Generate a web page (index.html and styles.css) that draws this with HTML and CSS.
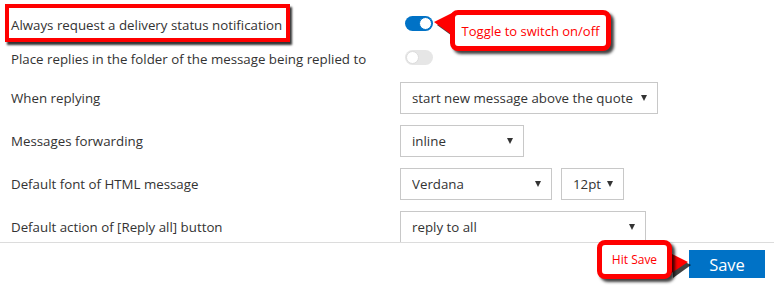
FILE: index.html
```html
<!DOCTYPE html>
<html lang="en">
<head>
    <meta charset="UTF-8">
    <meta name="viewport" content="width=device-width, initial-scale=1.0">
    <title>Mail settings</title>
    <link rel="stylesheet" href="styles.css">
</head>
<body>

    <div class="settings">
        <div class="row row-toggle">
            <label class="label">Always request a delivery status notification</label>
            <span class="toggle on"><span class="knob"></span></span>
        </div>
        <div class="row row-toggle">
            <label class="label">Place replies in the folder of the message being replied to</label>
            <span class="toggle"><span class="knob"></span></span>
        </div>
        <div class="row row-select first">
            <label class="label">When replying</label>
            <div class="controls">
                <span class="select-wrap w-reply">
                    <select><option>start new message above the quote</option></select>
                </span>
            </div>
        </div>
        <div class="row row-select">
            <label class="label">Messages forwarding</label>
            <div class="controls">
                <span class="select-wrap w-forward">
                    <select><option>inline</option></select>
                </span>
            </div>
        </div>
        <div class="row row-select">
            <label class="label">Default font of HTML message</label>
            <div class="controls">
                <span class="select-wrap w-font">
                    <select><option>Verdana</option></select>
                </span>
                <span class="select-wrap w-size">
                    <select><option>12pt</option></select>
                </span>
            </div>
        </div>
        <div class="row row-select">
            <label class="label">Default action of [Reply all] button</label>
            <div class="controls">
                <span class="select-wrap w-replyall">
                    <select><option>reply to all</option></select>
                </span>
            </div>
        </div>
    </div>

    <div class="footer">
        <button class="btn-save">Save</button>
    </div>

    <!-- annotations -->
    <div class="mark-box"></div>

    <svg class="pointer pointer-toggle" width="24" height="30" viewBox="0 0 24 30">
        <polygon points="3,13 21,4 21,26" fill="#000" opacity="0.75"/>
        <polygon points="0,10 18,1 18,23" fill="#f00"/>
    </svg>
    <div class="callout callout-toggle">Toggle to switch on/off</div>

    <svg class="pointer pointer-save" width="24" height="30" viewBox="0 0 24 30">
        <polygon points="21,13 3,4 3,26" fill="#000" opacity="0.75"/>
        <polygon points="18,10 0,1 0,22" fill="#f00"/>
    </svg>
    <div class="callout callout-save">Hit Save</div>

</body>
</html>
```

FILE: styles.css
```css
body {
    margin: 0;
    font-family: "Open Sans", "Noto Sans", Arial, sans-serif;
    font-size: 13.3px;
    color: #333;
    background: #fff;
}
.settings {
    height: 243px;
    overflow: hidden;
    padding-top: 8px;
    box-sizing: border-box;
    border-bottom: 1px solid #dcdcdc;
}
.row {
    display: grid;
    grid-template-columns: 389px 1fr;
    align-items: center;
    padding-left: 11px;
}
.row-toggle {
    height: 34px;
}
.row-select {
    height: 32px;
    margin-top: 11px;
}
.row-select.first {
    margin-top: 6px;
}
.label {
    line-height: 18px;
    white-space: nowrap;
}
.controls {
    display: flex;
    gap: 9px;
}
.toggle {
    position: relative;
    width: 28px;
    height: 15px;
    margin-left: 5px;
    margin-bottom: 4px;
    border-radius: 8px;
    background: #e6e6e6;
    box-sizing: border-box;
}
.toggle .knob {
    position: absolute;
    top: 1px;
    left: 1px;
    width: 13px;
    height: 13px;
    border-radius: 50%;
    background: #fff;
    box-sizing: border-box;
    border: 1px solid #dcdcdc;
}
.toggle.on {
    background: #0072c6;
}
.toggle.on .knob {
    left: auto;
    right: 1px;
    border: 1px solid #0072c6;
}
.select-wrap {
    position: relative;
    display: block;
    height: 32px;
}
.select-wrap::after {
    content: "";
    position: absolute;
    right: 11px;
    top: 13px;
    border-left: 3.5px solid transparent;
    border-right: 3.5px solid transparent;
    border-top: 6px solid #333;
    pointer-events: none;
}
.select-wrap select {
    appearance: none;
    -webkit-appearance: none;
    width: 100%;
    height: 32px;
    padding: 0 20px 0 11px;
    border: 1px solid #c8c8c8;
    border-radius: 0;
    background: #fff;
    font-family: inherit;
    font-size: 13.3px;
    color: #333;
}
.w-reply { width: 258px; }
.w-forward { width: 124px; }
.w-font { width: 152px; }
.w-size { width: 63px; }
.w-size select { padding: 0 14px 0 11px; }
.w-replyall { width: 246px; }
.footer {
    display: flex;
    justify-content: flex-end;
    padding: 7px 9px 0 0;
}
.btn-save {
    width: 76px;
    height: 28px;
    border: none;
    background: #0072c6;
    color: #fff;
    font-family: inherit;
    font-size: 16.5px;
    cursor: pointer;
}
.mark-box {
    position: absolute;
    left: 5px;
    top: 4px;
    width: 285px;
    height: 38px;
    box-sizing: border-box;
    border: 4px solid #f00;
    box-shadow: 2px 3px 2px rgba(0, 0, 0, 0.8);
}
.callout {
    position: absolute;
    box-sizing: border-box;
    border: 5px solid #f00;
    border-radius: 8px;
    background: #fff;
    color: #f00;
    display: flex;
    align-items: center;
    justify-content: center;
    box-shadow: 3px 3px 3px rgba(0, 0, 0, 0.75);
}
.callout-toggle {
    left: 450px;
    top: 10px;
    width: 161px;
    height: 41px;
    font-size: 13px;
}
.callout-save {
    left: 597px;
    top: 240px;
    width: 75px;
    height: 39px;
    font-size: 12px;
}
.pointer {
    position: absolute;
}
.pointer-toggle {
    left: 434px;
    top: 12px;
}
.pointer-save {
    left: 670px;
    top: 252px;
}
```
